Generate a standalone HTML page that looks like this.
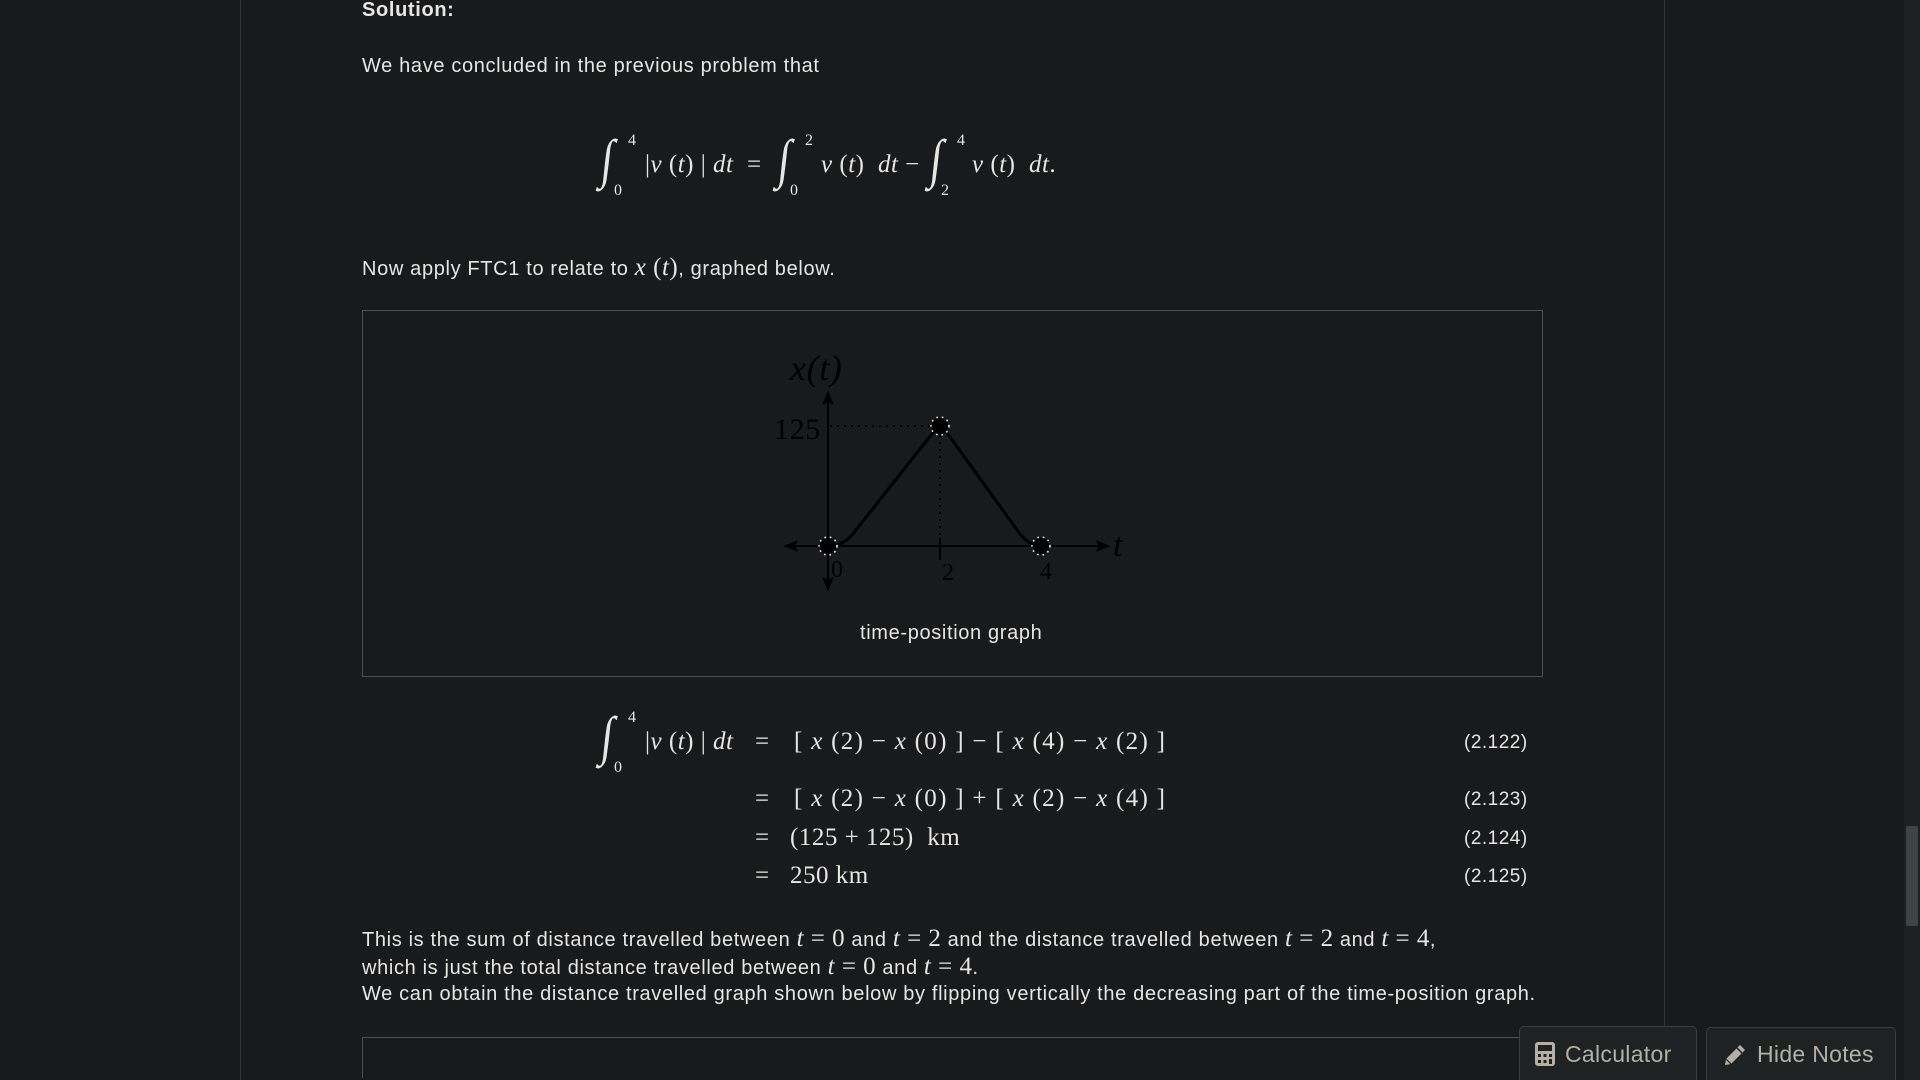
<!DOCTYPE html>
<html><head><meta charset="utf-8"><style>
html,body{margin:0;padding:0;overflow:hidden;height:1080px}
body{width:1920px;background:#181a1b;color:#e8e6e3;font-family:"Liberation Sans",sans-serif;font-size:20px;letter-spacing:0.65px;position:relative}
.a{position:absolute;white-space:nowrap}
.m{font-family:"Liberation Serif",serif;font-size:25px;letter-spacing:0.5px}
.i{font-style:italic}
.int{font-family:"Liberation Serif",serif;font-style:italic;font-size:54px;transform:scaleX(0.8) skewX(-8deg)}
.sub{font-family:"Liberation Serif",serif;font-size:16px}
.eqn{font-size:19px;letter-spacing:0.5px}
.btn{position:absolute;background:#1f2223;border:1px solid #3a3e41;border-bottom:none;border-radius:5px 5px 0 0;color:#b6afa4;font-size:23px;display:flex;align-items:center;letter-spacing:0.3px}
</style></head><body>
<div style="position:absolute;left:240px;top:0;width:1px;height:1080px;background:#303436"></div>
<div style="position:absolute;left:1664px;top:0;width:1px;height:1080px;background:#303436"></div>
<div style="position:absolute;left:1904px;top:0;width:16px;height:1080px;background:#1e2021"></div>
<div style="position:absolute;left:1906px;top:826px;width:12px;height:100px;background:#3f4447;border-radius:2px"></div>

<div class="a" style="left:362px;top:-1px;font-weight:bold">Solution:</div>
<div class="a" style="left:362px;top:55px">We have concluded in the previous problem that</div>

<!-- top equation -->
<div class="a int" style="left:600px;top:128px">∫</div>
<div class="a sub" style="left:628px;top:132px">4</div>
<div class="a sub" style="left:614px;top:182px">0</div>
<div class="a m" style="left:645px;top:151px"><span>|</span><span class="i">v</span> (<span class="i">t</span>) | <span class="i">dt</span> &nbsp;=</div>
<div class="a int" style="left:777px;top:128px">∫</div>
<div class="a sub" style="left:805px;top:132px">2</div>
<div class="a sub" style="left:790px;top:182px">0</div>
<div class="a m" style="left:821px;top:151px"><span class="i">v</span> (<span class="i">t</span>) &nbsp;<span class="i">dt</span> −</div>
<div class="a int" style="left:929px;top:128px">∫</div>
<div class="a sub" style="left:957px;top:132px">4</div>
<div class="a sub" style="left:941px;top:182px">2</div>
<div class="a m" style="left:972px;top:151px"><span class="i">v</span> (<span class="i">t</span>) &nbsp;<span class="i">dt</span>.</div>

<div class="a" style="left:362px;top:254px">Now apply FTC1 to relate to <span class="m"><span class="i">x</span> (<span class="i">t</span>)</span>, graphed below.</div>

<!-- figure -->
<div style="position:absolute;left:362px;top:310px;width:1179px;height:365px;border:1px solid #4a4f52"></div>
<svg style="position:absolute;left:0;top:0" width="1920" height="1080">
 <g stroke="#000" fill="none" stroke-width="2">
  <line x1="790" y1="546" x2="1104" y2="546"/>
  <polygon points="1108,546 1098,542 1100,546 1098,550" fill="#000"/>
  <polygon points="786,546 796,542 794,546 796,550" fill="#000"/>
  <line x1="828" y1="398" x2="828" y2="584"/>
  <polygon points="828,393 824,403 828,401 832,403" fill="#000"/>
  <polygon points="828,589 824,579 828,581 832,579" fill="#000"/>
  <line x1="940" y1="538" x2="940" y2="560"/>
  <path d="M828 546 Q845 546 856 530 L935 430 M945 430 L1020 534 Q1030 546 1041 546" stroke-width="3"/>
  <line x1="830" y1="426" x2="938" y2="426" stroke-dasharray="2 5"/>
  <line x1="940" y1="428" x2="940" y2="536" stroke-dasharray="2 5"/>
 </g>
 <g fill="#000">
  <circle cx="828" cy="546" r="8"/><circle cx="940" cy="426" r="8"/><circle cx="1041" cy="546" r="8"/>
 </g>
 <g fill="none" stroke="#fff" stroke-width="1.5" stroke-dasharray="1.5 4">
  <circle cx="828" cy="546" r="9"/><circle cx="940" cy="426" r="9"/><circle cx="1041" cy="546" r="9"/>
 </g>
 <g font-family="Liberation Serif" fill="#000">
  <text x="790" y="380" font-size="36" font-style="italic">x(t)</text>
  <text x="774" y="439" font-size="30">125</text>
  <text x="831" y="577" font-size="24">0</text>
  <text x="942" y="580" font-size="24">2</text>
  <text x="1040" y="579" font-size="24">4</text>
  <text x="1113" y="556" font-size="34" font-style="italic">t</text>
 </g>
</svg>
<div class="a" style="left:860px;top:622px">time-position graph</div>

<!-- align -->
<div class="a int" style="left:600px;top:705px">∫</div>
<div class="a sub" style="left:628px;top:709px">4</div>
<div class="a sub" style="left:614px;top:759px">0</div>
<div class="a m" style="left:645px;top:728px">|<span class="i">v</span> (<span class="i">t</span>) | <span class="i">dt</span></div>
<div class="a m" style="left:755px;top:728px">=</div>
<div class="a m" style="left:794px;top:728px;letter-spacing:1.3px">[ <span class="i">x</span> (2) − <span class="i">x</span> (0) ] − [ <span class="i">x</span> (4) − <span class="i">x</span> (2) ]</div>
<div class="a m" style="left:755px;top:785px">=</div>
<div class="a m" style="left:794px;top:785px;letter-spacing:1.3px">[ <span class="i">x</span> (2) − <span class="i">x</span> (0) ] + [ <span class="i">x</span> (2) − <span class="i">x</span> (4) ]</div>
<div class="a m" style="left:755px;top:824px">=</div>
<div class="a m" style="left:790px;top:824px">(125 + 125) &nbsp;km</div>
<div class="a m" style="left:755px;top:862px">=</div>
<div class="a m" style="left:790px;top:862px">250 km</div>
<div class="a eqn" style="left:1464px;top:732px">(2.122)</div>
<div class="a eqn" style="left:1464px;top:789px">(2.123)</div>
<div class="a eqn" style="left:1464px;top:828px">(2.124)</div>
<div class="a eqn" style="left:1464px;top:866px">(2.125)</div>

<div class="a" style="left:362px;top:925px">This is the sum of distance travelled between <span class="m"><span class="i">t</span> = 0</span> and <span class="m"><span class="i">t</span> = 2</span> and the distance travelled between <span class="m"><span class="i">t</span> = 2</span> and <span class="m"><span class="i">t</span> = 4</span>,</div>
<div class="a" style="left:362px;top:953px">which is just the total distance travelled between <span class="m"><span class="i">t</span> = 0</span> and <span class="m"><span class="i">t</span> = 4</span>.</div>
<div class="a" style="left:362px;top:983px">We can obtain the distance travelled graph shown below by flipping vertically the decreasing part of the time-position graph.</div>

<div style="position:absolute;left:362px;top:1037px;width:1179px;height:40px;border:1px solid #4a4f52;border-bottom:none"></div>

<div class="btn" style="left:1519px;top:1026px;width:176px;height:54px">
 <svg style="margin-left:15px;margin-right:10px" width="20" height="24" viewBox="0 0 20 24"><rect x="0" y="0" width="20" height="24" rx="3" fill="#b6afa4"/><rect x="3" y="3" width="14" height="6" fill="#1f2223"/><g fill="#1f2223"><rect x="3" y="12" width="3" height="3"/><rect x="8.5" y="12" width="3" height="3"/><rect x="14" y="12" width="3" height="3"/><rect x="3" y="18" width="3" height="3"/><rect x="8.5" y="18" width="3" height="3"/><rect x="14" y="17" width="3" height="5"/></g></svg>Calculator</div>
<div class="btn" style="left:1706px;top:1027px;width:188px;height:53px">
 <svg style="margin-left:16px;margin-right:10px" width="24" height="24" viewBox="0 0 24 24"><path d="M17 2 L22 7 L8 21 L2 22 L3 16 Z" fill="#b6afa4"/><path d="M14 5 L19 10" stroke="#1f2223" stroke-width="1.5"/><path d="M3 16 L8 21" stroke="#1f2223" stroke-width="1.2"/></svg>Hide Notes</div>
</body></html>
